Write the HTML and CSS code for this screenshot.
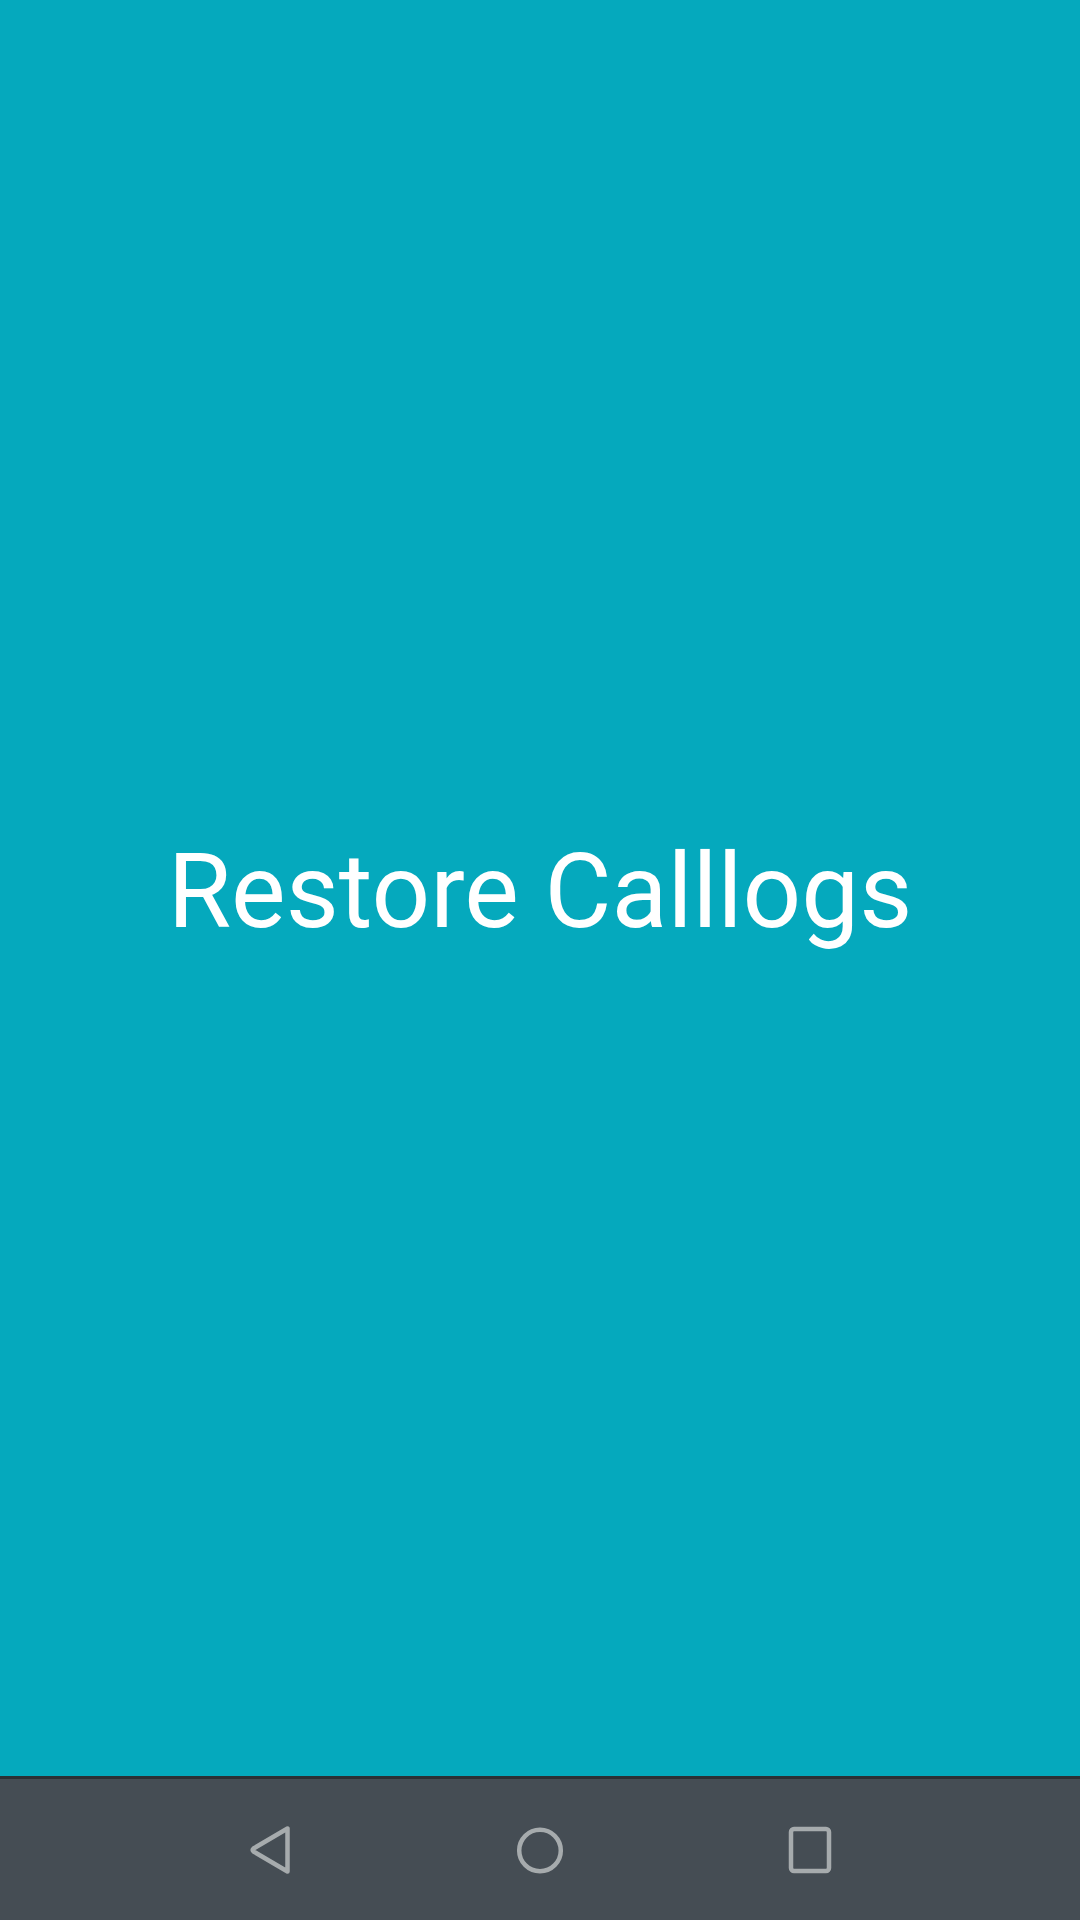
FILE: index.html
```html
<!DOCTYPE html>
<html>
<head>
<meta charset="utf-8">
<link rel="stylesheet" href="styles.css">
</head>
<body>
<div class="screen">
  <main class="content">
    <h1 class="title">Restore Calllogs</h1>
  </main>
  <nav class="navbar">
    <svg class="nav-icon" width="60" height="60" viewBox="0 0 60 60">
      <path d="M47.5 8.5 L47.5 51.5 L13.5 31.5 Q12 30 13.5 28.5 Z" fill="none" stroke="#a6abad" stroke-width="4.5" stroke-linejoin="round"/>
    </svg>
    <svg class="nav-icon" width="60" height="60" viewBox="0 0 60 60">
      <circle cx="30" cy="30.5" r="20.8" fill="none" stroke="#a6abad" stroke-width="4.5"/>
    </svg>
    <svg class="nav-icon" width="60" height="60" viewBox="0 0 60 60">
      <rect x="11" y="9" width="38" height="42" rx="3" fill="none" stroke="#a6abad" stroke-width="4.5"/>
    </svg>
  </nav>
</div>
</body>
</html>
```
FILE: styles.css
```css
html, body {
  margin: 0;
  padding: 0;
}
body {
  width: 1080px;
  height: 1920px;
  overflow: hidden;
  font-family: Roboto, "Liberation Sans", sans-serif;
}
.screen {
  display: flex;
  flex-direction: column;
  width: 1080px;
  height: 1920px;
}
.content {
  flex: 1;
  background: #05a9bd;
  display: flex;
  align-items: center;
  justify-content: center;
}
.title {
  margin: 0;
  color: #ffffff;
  font-weight: 400;
  font-size: 103px;
  line-height: 1;
  padding-top: 7px;
}
.navbar {
  height: 141px;
  background: #454d54;
  border-top: 3px solid #2b3035;
  display: flex;
  align-items: center;
  justify-content: center;
  gap: 210px;
}
.nav-icon {
  display: block;
}
```
